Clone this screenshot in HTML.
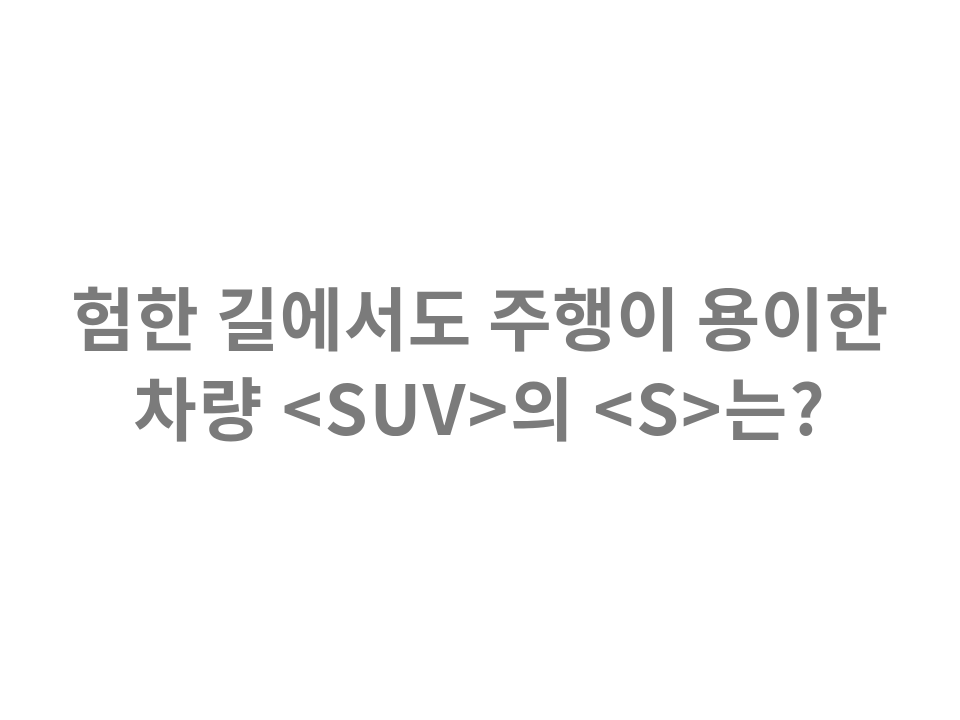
<!DOCTYPE html>
<html><head><meta charset="utf-8"><style>
html,body{margin:0;padding:0;background:#fff;width:960px;height:720px;overflow:hidden}
.t{position:absolute;left:0;width:960px;text-align:center;font-family:"Noto Sans CJK KR",sans-serif;font-weight:bold;font-size:69px;color:#7b7b7b;line-height:90px;white-space:nowrap}
</style></head><body>
<div class="t" style="top:270px;letter-spacing:0.6px">험한 길에서도 주행이 용이한</div>
<div class="t" style="top:360px;letter-spacing:2px">차량 &lt;SUV&gt;의 &lt;S&gt;는?</div>
</body></html>
